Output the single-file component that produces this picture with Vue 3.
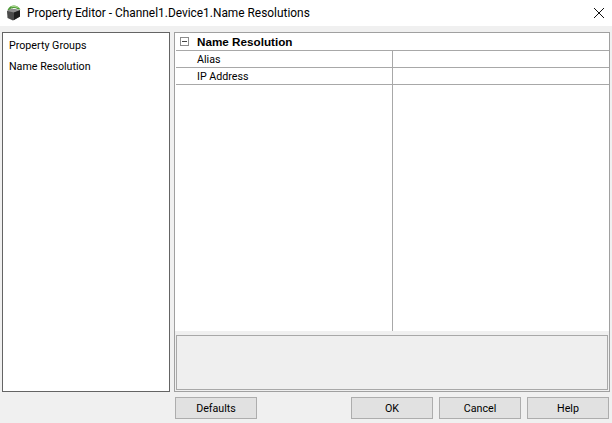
<script setup>
const rows = ['Alias', 'IP Address']
const buttons = ['OK', 'Cancel', 'Help']
</script>

<template>
  <div class="dialog">
    <header class="titlebar">
      <svg class="appicon" width="16" height="18" viewBox="0 0 16 18">
        <path d="M1.5 6 C4 0.5 11 0 14.5 5.5 L12 5.5 C9 3.5 5.5 3.5 3 6.5 Z" fill="#4c9a35" />
        <path d="M5 2.4 C8 1.2 11 2 13 4 L11 3.8 C9.5 3 7.5 2.8 5.5 3.4 Z" fill="#a5d488" />
        <path d="M1 7 L6 4.8 L14 6.2 L14 12.5 L7 16.5 L1.5 14 Z" fill="#4a4a4a" />
        <path d="M1 7 L6 4.8 L14 6.2 L8 8.6 Z" fill="#8e8e8e" />
        <path d="M8 8.6 L14 6.2 L14 12.5 L8 16 Z" fill="#1f1f1f" />
      </svg>
      <span class="title">Property Editor - Channel1.Device1.Name Resolutions</span>
      <svg class="close" width="10" height="10" viewBox="0 0 10 10">
        <path d="M0 0 L10 10 M10 0 L0 10" stroke="#111" stroke-width="1" fill="none" />
      </svg>
    </header>

    <main class="body">
      <nav class="groups">
        <div class="group">Property Groups</div>
        <div class="group">Name Resolution</div>
      </nav>

      <section class="editor">
        <div class="grid">
          <div class="category">
            <span class="toggle"><i></i></span>
            <span class="catname">Name Resolution</span>
          </div>
          <div v-for="row in rows" :key="row" class="row">
            <div class="name">{{ row }}</div>
            <div class="value"></div>
          </div>
          <div class="filler">
            <div class="name"></div>
            <div class="value"></div>
          </div>
        </div>
        <div class="help"></div>
      </section>
    </main>

    <footer class="actions">
      <button class="btn">Defaults</button>
      <div class="right">
        <button v-for="b in buttons" :key="b" class="btn">{{ b }}</button>
      </div>
    </footer>
  </div>
</template>

<style scoped>
.dialog {
  width: 612px;
  height: 423px;
  background: #f0f0f0;
  font-family: Roboto, "Liberation Sans", Arial, sans-serif;
  font-size: 10.7px;
  color: #000;
  display: flex;
  flex-direction: column;
  overflow: hidden;
}
.titlebar {
  height: 26px;
  background: #fff;
  display: flex;
  align-items: center;
  padding: 0 8px 0 6px;
  flex: none;
}
.appicon { flex: none; margin-right: 5px; }
.title { flex: 1; font-size: 11.9px; white-space: nowrap; }
.close { flex: none; }
.body {
  flex: none;
  height: 360px;
  margin-top: 6px;
  padding: 0 2px;
  display: flex;
  gap: 4px;
}
.groups {
  width: 168px;
  box-sizing: border-box;
  background: #fff;
  border: 1px solid #646464;
  padding-top: 3px;
}
.group {
  height: 21px;
  line-height: 19px;
  padding-left: 6px;
}
.editor {
  flex: 1;
  box-sizing: border-box;
  border: 1px solid #a0a0a0;
  display: flex;
  flex-direction: column;
  min-width: 0;
}
.grid {
  height: 298px;
  flex: none;
  background: #fff;
  display: flex;
  flex-direction: column;
  padding-left: 1px;
}
.category {
  height: 18px;
  box-sizing: border-box;
  border-bottom: 1px solid #a8a8a8;
  display: flex;
  align-items: center;
  padding-left: 4px;
}
.toggle {
  width: 9px;
  height: 9px;
  box-sizing: border-box;
  border: 1px solid #8c8c8c;
  display: flex;
  align-items: center;
  justify-content: center;
  margin-right: 8px;
}
.toggle i { display: block; width: 5px; height: 1px; background: #444; }
.catname { font-family: "Liberation Sans", Arial, sans-serif; font-weight: 700; font-size: 11.7px; }
.row {
  height: 17px;
  box-sizing: border-box;
  display: flex;
  border-bottom: 1px solid #a8a8a8;
  line-height: 18px;
}
.filler { flex: 1; display: flex; }
.name { width: 217px; padding-left: 21px; box-sizing: border-box; border-right: 1px solid #a8a8a8; }
.value { flex: 1; }
.help {
  flex: 1;
  margin: 4px 1px 1px;
  background: #efefef;
  border: 1px solid #a8a8a8;
}
.actions {
  flex: 1;
  display: flex;
  justify-content: space-between;
  padding: 5px 3px 0 175px;
}
.right { display: flex; gap: 6px; }
.btn {
  width: 82px;
  height: 22px;
  padding: 0;
  background: #e1e1e1;
  border: 1px solid #adadad;
  font: inherit;
  color: #000;
}
</style>
